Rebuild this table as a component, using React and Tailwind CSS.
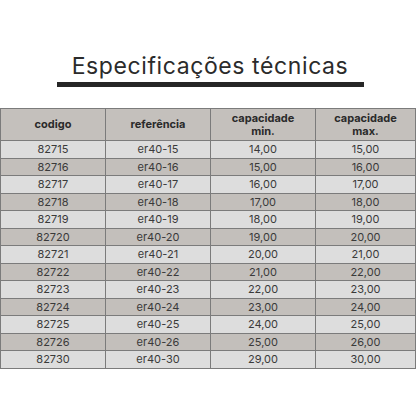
const rows = [
    ['82715', 'er40-15', '14,00', '15,00'],
    ['82716', 'er40-16', '15,00', '16,00'],
    ['82717', 'er40-17', '16,00', '17,00'],
    ['82718', 'er40-18', '17,00', '18,00'],
    ['82719', 'er40-19', '18,00', '19,00'],
    ['82720', 'er40-20', '19,00', '20,00'],
    ['82721', 'er40-21', '20,00', '21,00'],
    ['82722', 'er40-22', '21,00', '22,00'],
    ['82723', 'er40-23', '22,00', '23,00'],
    ['82724', 'er40-24', '23,00', '24,00'],
    ['82725', 'er40-25', '24,00', '25,00'],
    ['82726', 'er40-26', '25,00', '26,00'],
    ['82730', 'er40-30', '29,00', '30,00'],
];

export default function App() {
    return (
        <div className="w-[420px] h-[420px] bg-white overflow-hidden font-['Inter',sans-serif]">
            <div className="pt-[52px] flex flex-col items-center">
                <h1 className="text-[23px] leading-[28px] font-normal text-[#2b2b2b] tracking-[0.6px]">
                    Especificações técnicas
                </h1>
                <div className="mt-[2px] w-[307px] h-[5px] bg-[#262626]" />
            </div>

            <table className="mt-[21px] w-[416px] border-collapse table-fixed text-center">
                <thead>
                    <tr className="h-[32px] bg-[#c4c0bc]">
                        <th className="w-[105px] border border-[#7b7b7b] text-[11px] font-bold text-[#2a2a2a]">codigo</th>
                        <th className="w-[105px] border border-[#7b7b7b] text-[11px] font-bold text-[#2a2a2a]">referência</th>
                        <th className="w-[105px] border border-[#7b7b7b] text-[11px] leading-[13px] font-bold text-[#2a2a2a]">capacidade<br />min.</th>
                        <th className="border border-[#7b7b7b] text-[11px] leading-[13px] font-bold text-[#2a2a2a]">capacidade<br />max.</th>
                    </tr>
                </thead>
                <tbody>
                    {rows.map((r, i) => (
                        <tr key={r[0]} className={i % 2 === 0 ? 'h-[17.5px] bg-[#dddddd]' : 'h-[17.5px] bg-[#c3bfbb]'}>
                            {r.map((c, j) => (
                                <td key={j} className="border border-[#7b7b7b] p-0 text-[11px] leading-[14px] text-[#3a3a3a]">
                                    {c}
                                </td>
                            ))}
                        </tr>
                    ))}
                </tbody>
            </table>
        </div>
    );
}
